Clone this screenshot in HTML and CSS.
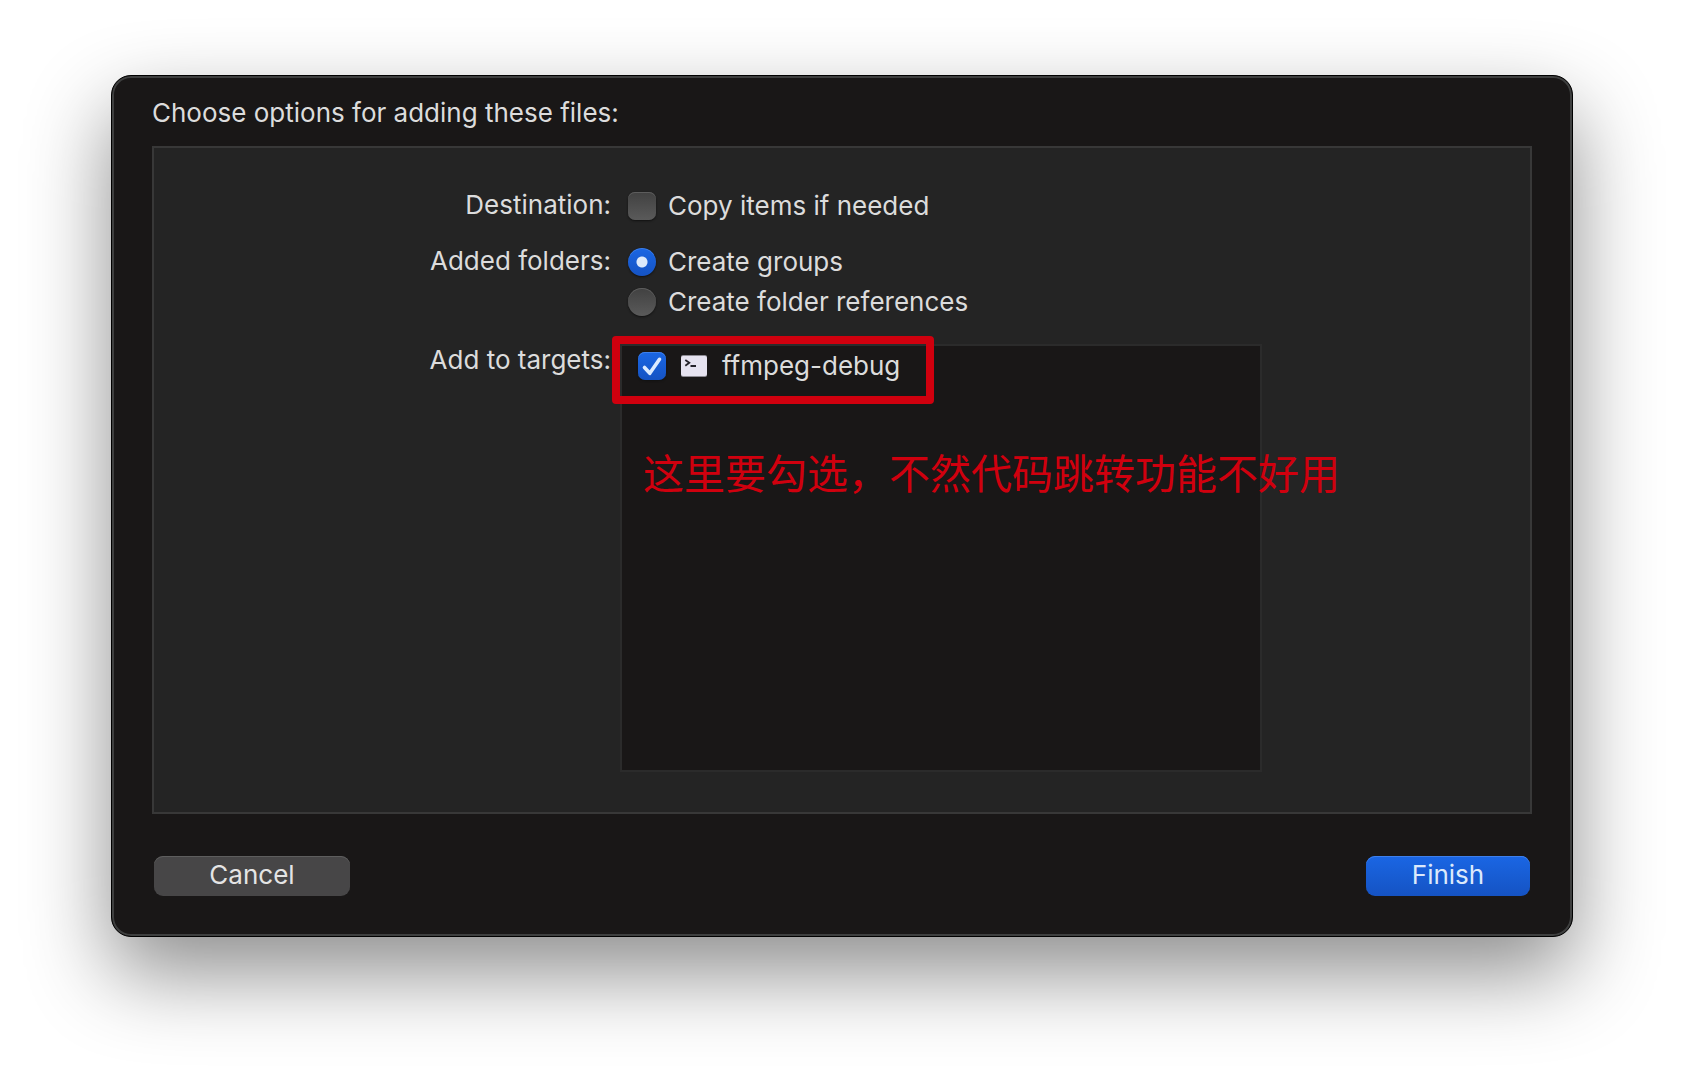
FILE: index.html
```html
<!DOCTYPE html>
<html lang="en">
<head>
<meta charset="utf-8">
<meta name="viewport" content="width=device-width, initial-scale=1">
<title>Add files</title>
<link rel="stylesheet" href="styles.css">
</head>
<body>
<form class="dialog">
  <h1 class="title">Choose options for adding these files:</h1>
  <div class="panel">
    <div class="row">
      <span class="label" id="destination">Destination:</span>
      <div class="options" role="group" aria-labelledby="destination">
        <label class="option"><input class="control check" type="checkbox">Copy items if needed</label>
      </div>
    </div>
    <div class="row">
      <span class="label" id="folders">Added folders:</span>
      <div class="options" role="radiogroup" aria-labelledby="folders">
        <label class="option"><input class="control radio" type="radio" name="folders" checked>Create groups</label>
        <label class="option"><input class="control radio" type="radio" name="folders">Create folder references</label>
      </div>
    </div>
    <div class="row row-targets">
      <span class="label" id="targets">Add to targets:</span>
      <div class="targets" role="group" aria-labelledby="targets">
        <label class="target">
          <span class="tick">
            <input class="control check" type="checkbox" checked>
            <svg class="tick-mark" viewBox="0 0 28 28" aria-hidden="true"><path d="M6.5 15.5 11.8 21.3 21.5 7.3" fill="none" stroke="#dcebff" stroke-width="3.6" stroke-linecap="round" stroke-linejoin="round"/></svg>
          </span>
          <svg class="terminal" viewBox="0 0 26 22" aria-hidden="true"><rect width="26" height="22" rx="2" fill="#8d8b93"/><rect y="1" width="26" height="20" rx="2" fill="#e6e3f0"/><path d="M4.3 5 8.3 7.8 4.3 10.8M9.5 11H15" fill="none" stroke="#242229" stroke-width="1.8"/></svg>
          ffmpeg-debug
        </label>
        <div class="highlight"></div>
        <p class="note" lang="zh-CN">这里要勾选，不然代码跳转功能不好用</p>
      </div>
    </div>
  </div>
  <div class="actions">
    <button class="button cancel" type="button">Cancel</button>
    <button class="button finish" type="submit">Finish</button>
  </div>
</form>
</body>
</html>
```

FILE: styles.css
```css
* {
  box-sizing: border-box;
}

body {
  margin: 0;
  min-height: 100vh;
  padding: 75px 111px 147px;
  background: #fff;
  color: #dcdcdc;
  font: 26px/32px Inter, "Liberation Sans", sans-serif;
}

.dialog {
  padding: 21px 40px 40px;
  border: 1px solid #000;
  border-radius: 20px;
  background: #191717;
  box-shadow: inset 0 0 0 2px #3e3f3f, 0 36px 84px rgba(0, 0, 0, 0.45);
}

.title {
  margin: 0;
  font-size: 26px;
  font-weight: 400;
}

.panel {
  margin-top: 17px;
  padding: 38px 32px 40px;
  border: 2px solid #383838;
  background: #242424;
}

.row {
  display: grid;
  grid-template-columns: 425px 1fr;
  column-gap: 17px;
  margin-bottom: 16px;
}

.label {
  padding-top: 3px;
  text-align: right;
  white-space: nowrap;
}

.options {
  display: flex;
  flex-direction: column;
}

.option {
  display: flex;
  align-items: center;
  gap: 12px;
  height: 40px;
  white-space: nowrap;
}

.control {
  appearance: none;
  display: block;
  flex: none;
  width: 28px;
  height: 28px;
  margin: 0;
  background: linear-gradient(#414141, #5a5a5a);
  box-shadow: inset 0 1px #5d5d5d, 0 1px 2px #111;
}

.check {
  border-radius: 7px;
}

.radio {
  border-radius: 50%;
}

.control:checked {
  background: linear-gradient(#1a66e4, #1553c3);
  box-shadow: inset 0 1px #3e80eb, 0 1px 2px #111;
}

.radio:checked {
  background: radial-gradient(circle, #dce9fb 5px, transparent 6px), linear-gradient(#1a66e4, #1553c3);
}

.row-targets {
  column-gap: 9px;
  margin: 22px 0 0;
}

.row-targets .label {
  padding-top: 0;
}

.targets {
  position: relative;
  width: 642px;
  height: 428px;
  border: 2px solid #2b2b2b;
  background: #191717;
}

.target {
  display: flex;
  align-items: center;
  gap: 15px;
  height: 40px;
  padding-left: 16px;
}

.tick {
  position: relative;
}

.tick-mark {
  position: absolute;
  inset: 0;
  width: 28px;
  height: 28px;
  pointer-events: none;
}

.terminal {
  width: 26px;
  height: 22px;
}

.highlight {
  position: absolute;
  top: -10px;
  left: -10px;
  width: 322px;
  height: 68px;
  border: 8px solid #d0000e;
  border-radius: 4px;
  pointer-events: none;
}

.note {
  position: absolute;
  top: 101px;
  left: 21px;
  margin: 0;
  color: #d0000e;
  font: 41px/48px "Noto Sans CJK SC", sans-serif;
  white-space: nowrap;
}

.actions {
  display: flex;
  justify-content: space-between;
  margin-top: 42px;
  padding: 0 2px;
}

.button {
  height: 40px;
  padding: 0 0 2px;
  border: 0;
  border-radius: 9px;
  color: #e4e4e4;
  font: inherit;
}

.cancel {
  width: 196px;
  background: #474647;
  box-shadow: inset 0 1px #5e5e5e;
}

.finish {
  width: 164px;
  background: linear-gradient(#1a66e4, #1553c3);
  box-shadow: inset 0 1px #3e80eb;
  color: #dce9fb;
}
```
